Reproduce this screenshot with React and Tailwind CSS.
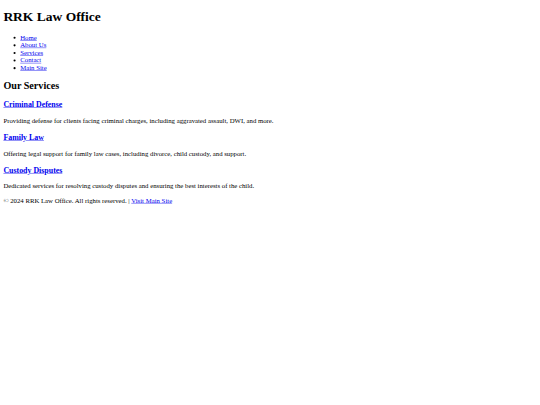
import React from 'react';

const navLinks = ['Home', 'About Us', 'Services', 'Contact', 'Main Site'];

const services = [
    {
        title: 'Criminal Defense',
        text: 'Providing defense for clients facing criminal charges, including aggravated assault, DWI, and more.'
    },
    {
        title: 'Family Law',
        text: 'Offering legal support for family law cases, including divorce, child custody, and support.'
    },
    {
        title: 'Custody Disputes',
        text: 'Dedicated services for resolving custody disputes and ensuring the best interests of the child.'
    }
];

const linkClass = 'text-[#0000ee] underline';

const App = () => {
    return (
        <div className="bg-white h-screen overflow-hidden">
            {/* desktop-sized page, scaled down like a thumbnail */}
            <div className="flow-root w-[1280px] origin-top-left scale-[0.421875]">
                <div className="m-2 text-black text-[16px] leading-[normal] font-['Liberation_Serif','Times_New_Roman',serif]">
                    <header>
                        <h1 className="text-[2em] font-bold my-[0.67em]">RRK Law Office</h1>
                        <nav>
                            <ul className="list-disc pl-10 my-4">
                                {navLinks.map((link) => (
                                    <li key={link}>
                                        <a href="#" className={linkClass}>{link}</a>
                                    </li>
                                ))}
                            </ul>
                        </nav>
                    </header>

                    <section>
                        <h2 className="text-[1.5em] font-bold my-[0.83em]">Our Services</h2>
                        {services.map((s) => (
                            <div key={s.title}>
                                <h3 className="text-[1.17em] font-bold my-[1em]">
                                    <a href="#" className={linkClass}>{s.title}</a>
                                </h3>
                                <p className="my-4">{s.text}</p>
                            </div>
                        ))}
                    </section>

                    <footer>
                        <p className="my-4">
                            © 2024 RRK Law Office. All rights reserved. | <a href="#" className={linkClass}>Visit Main Site</a>
                        </p>
                    </footer>
                </div>
            </div>
        </div>
    );
};

export default App;
